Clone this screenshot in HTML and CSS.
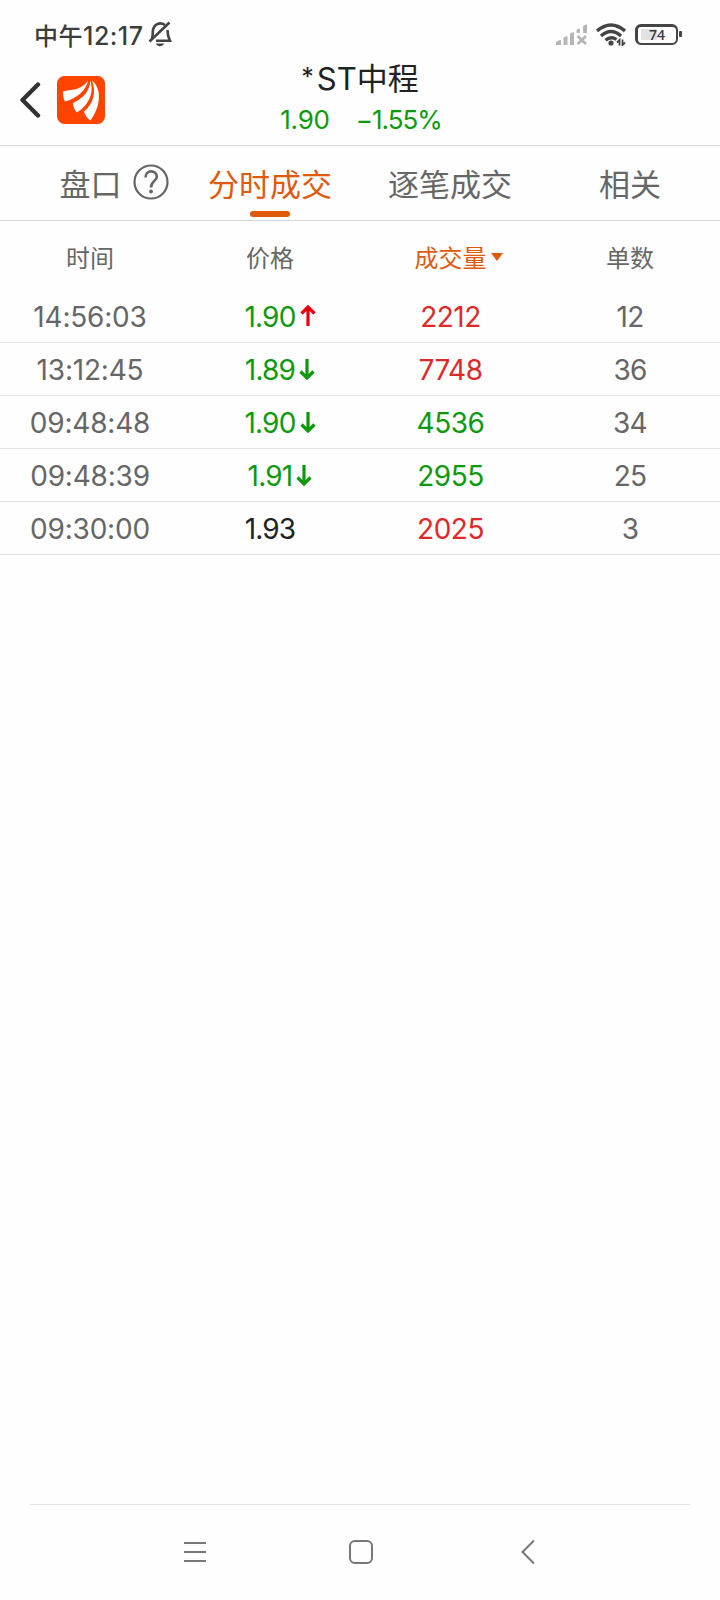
FILE: index.html
```
<!DOCTYPE html>
<html lang="zh-CN">
<head>
  <meta charset="UTF-8">
  <meta name="viewport" content="width=device-width, initial-scale=1">
  <title>*ST中程 分时成交</title>
  <link rel="stylesheet" href="styles.css">
</head>
<body>

<!-- Status bar -->
<div class="status-bar">
  <div class="status-left">
    <span class="clock"><span class="clock-cn">中午</span>12:17</span>
    <svg class="icon-mute" width="24" height="26" viewBox="0 0 24 26" fill="none" stroke="#444" stroke-width="2.600">
      <path d="M4 18C5 15 4.500 12 5 9C6 3 12 .5 17 4M19.500 9C19.500 14 20 16 22 19.800H8"/>
      <path d="M1.500 20.500L21.500 1.500"/>
      <path d="M8 22.500H16C15 26 9 26 8 22.500Z" fill="#444" stroke="none"/>
    </svg>
  </div>
  <div class="status-right">
    <svg class="icon-signal" width="32" height="21" viewBox="0 0 32 21" fill="#b5b5b5">
      <path d="M0 21V18.500Q1 16.500 5 16V21Z"/>
      <path d="M7.500 21V14Q8 12.500 11.500 12V21Z"/>
      <path d="M14 21V10Q14.500 8.500 18 8V21Z"/>
      <path d="M20.500 6.500Q20.500 5 24 4.500V9H20.500ZM27 3Q27 1 31 .5V9H27Z"/>
      <path d="M21.500 12L30 20M30 12L21.500 20" stroke="#b5b5b5" stroke-width="2.800"/>
    </svg>
    <svg class="icon-wifi" width="30" height="23" viewBox="0 0 30 23" fill="none" stroke="#444" stroke-width="3.400">
      <path d="M1 8Q15-4 29 8"/>
      <path d="M5 13Q15 4 25 13"/>
      <path d="M9.500 17.300Q15 12.500 20.500 16.500"/>
      <circle cx="15" cy="20" r="2.600" fill="#444" stroke="none"/>
      <path d="M23.500 22.500V17L21 19.500M26.500 16.500V22L29 19.500" stroke-width="1.800"/>
    </svg>
    <div class="battery"><div class="battery-body">74</div><div class="battery-tip"></div></div>
  </div>
</div>

<header>
  <div class="header-left">
    <svg class="icon-back" width="22" height="36" viewBox="0 0 22 36" fill="none" stroke="#333" stroke-width="4.400" stroke-linecap="round" stroke-linejoin="round">
      <path d="M19 2.500L3.500 18L19 33.500"/>
    </svg>
    <svg class="logo" width="48" height="48" viewBox="0 0 48 48">
      <rect width="48" height="48" rx="7.500" fill="#ff4400"/>
      <g fill="#fff">
        <path d="M31 4.500C29.500 14 20 22.500 8 25.500C6.500 23 6 19 6 15.500C12 13.500 16 14.500 21 12.500C26 10.500 29 7.500 31 4.500Z"/>
        <path d="M33.300 4.500C37.500 17 31.500 29.500 20 36.500C17.500 34 16 30.500 15.800 27C26 22.500 33 15 33.300 4.500Z"/>
        <path d="M35 4.500C45.500 13 43.500 31 33.500 44.500C30 42 28 39 27 35.500C36.500 28 39.500 16 35 4.500Z"/>
      </g>
    </svg>
  </div>
  <div class="stock">
    <h1><span class="star">*</span>ST中程</h1>
    <p class="quote"><span>1.90</span><span class="change">−1.55%</span></p>
  </div>
</header>

<nav>
  <a class="tab tab-quote">盘口
    <svg width="36" height="36" viewBox="0 0 36 36" fill="none" stroke="#666" stroke-width="2.200">
      <circle cx="18" cy="18" r="16.500"/>
      <path d="M12.500 13.500C12.500 5.500 23.800 5.500 23.800 12.800C23.800 17 18 17 18 23.500" stroke-width="2.600"/>
      <circle cx="18" cy="27.500" r="1.900" fill="#666" stroke="none"/>
    </svg>
  </a>
  <a class="tab active">分时成交</a>
  <a class="tab">逐笔成交</a>
  <a class="tab">相关</a>
</nav>

<main>
  <div class="row row-head">
    <div>时间</div>
    <div>价格</div>
    <div class="sorted">成交量<i class="caret"></i></div>
    <div>单数</div>
  </div>
  <div class="row">
    <div class="time">14:56:03</div>
    <div class="price green">1.90<svg class="arrow red-arrow" viewBox="0 0 16 22"><path d="M8 21V2M1.500 8.500L8 2L14.500 8.500"/></svg></div>
    <div class="volume red">2212</div>
    <div class="count">12</div>
  </div>
  <div class="row">
    <div class="time">13:12:45</div>
    <div class="price green">1.89<svg class="arrow" viewBox="0 0 16 22"><path d="M8 1V20M1.500 13.500L8 20L14.500 13.500"/></svg></div>
    <div class="volume red">7748</div>
    <div class="count">36</div>
  </div>
  <div class="row">
    <div class="time">09:48:48</div>
    <div class="price green">1.90<svg class="arrow" viewBox="0 0 16 22"><path d="M8 1V20M1.500 13.500L8 20L14.500 13.500"/></svg></div>
    <div class="volume green">4536</div>
    <div class="count">34</div>
  </div>
  <div class="row">
    <div class="time">09:48:39</div>
    <div class="price green">1.91<svg class="arrow" viewBox="0 0 16 22"><path d="M8 1V20M1.500 13.500L8 20L14.500 13.500"/></svg></div>
    <div class="volume green">2955</div>
    <div class="count">25</div>
  </div>
  <div class="row">
    <div class="time">09:30:00</div>
    <div class="price flat">1.93<span class="arrow"></span></div>
    <div class="volume red">2025</div>
    <div class="count">3</div>
  </div>
</main>

<!-- System navigation -->
<footer>
  <svg width="26" height="26" viewBox="0 0 26 26" fill="none" stroke="#777" stroke-width="2">
    <path d="M2 4H24M2 13H24M2 22H24"/>
  </svg>
  <svg width="26" height="26" viewBox="0 0 26 26" fill="none" stroke="#777" stroke-width="2">
    <rect x="2" y="2" width="22" height="22" rx="5"/>
  </svg>
  <svg width="26" height="26" viewBox="0 0 26 26" fill="none" stroke="#777" stroke-width="2">
    <path d="M20 1.500L8.500 13L20 24.500"/>
  </svg>
</footer>

</body>
</html>
```

FILE: styles.css
```
:root {
  --orange: #e05a0c;
  --green: #0d990d;
  --red: #e02828;
  --text: #666;
  --line: #d8d8d8;
}

* {
  margin: 0;
  padding: 0;
  box-sizing: border-box;
}

body {
  display: flex;
  flex-direction: column;
  height: 1600px;
  background: #fefefe;
  color: var(--text);
  font-family: Inter, "Noto Sans CJK SC", sans-serif;
}

svg {
  display: block;
  flex-shrink: 0;
}

.status-bar {
  display: flex;
  justify-content: space-between;
  height: 60px;
  padding: 0 38px 0 34px;
  color: #3c3c3c;
}

.status-left, .status-right {
  display: flex;
  align-items: center;
  height: 68px;
}

.clock {
  font-size: 25px;
  font-weight: 500;
  letter-spacing: 0.5px;
}

.clock-cn {
  font-size: 24px;
}

.icon-mute {
  margin-left: 4px;
}

.icon-signal {
  margin-top: 1px;
}

.icon-wifi {
  margin: 1px 9px 0 8px;
}

.battery {
  display: flex;
  align-items: center;
  gap: 1px;
}

.battery-body {
  width: 43px;
  height: 21px;
  border: 2.5px solid #444;
  border-width: 3px 2px 2px 3px;
  border-radius: 6px;
  background: linear-gradient(#e2e2e2, #e2e2e2) 3px 2px / 16px 11px no-repeat;
  font: 600 14px/16px "Open Sans", sans-serif;
  text-align: center;
}

.battery-tip {
  width: 3px;
  height: 6px;
  border-radius: 1px;
  background: #444;
}

header {
  display: grid;
  grid-template-columns: 180px 360px 180px;
  height: 86px;
  border-bottom: 1px solid var(--line);
}

.header-left {
  display: flex;
  align-items: center;
  gap: 16px;
  height: 80px;
  padding-left: 19px;
}

.stock {
  text-align: center;
}

h1 {
  height: 38px;
  color: #222;
  font-size: 31px;
  font-weight: 400;
  line-height: 38px;
}

.star {
  margin-right: 3px;
  font-size: 25px;
  line-height: 1;
  vertical-align: 4px;
}

.quote {
  display: flex;
  justify-content: center;
  gap: 26px;
  padding-left: 2px;
  color: var(--green);
  font-size: 26px;
  line-height: 43px;
  letter-spacing: -0.2px;
}

.change {
  letter-spacing: -1px;
}

nav {
  display: grid;
  grid-template-columns: repeat(4, 180px);
  height: 75px;
  border-bottom: 1px solid var(--line);
}

.tab {
  position: relative;
  display: flex;
  align-items: center;
  justify-content: center;
  height: 74px;
  padding-bottom: 2px;
  font-size: 31px;
}

.tab-quote {
  gap: 11px;
  padding-left: 48px;
}

.tab.active {
  color: var(--orange);
}

.tab.active::after {
  content: "";
  position: absolute;
  bottom: 3px;
  width: 40px;
  height: 6px;
  border-radius: 3px;
  background: var(--orange);
}

main {
  flex: 1;
}

.row {
  display: grid;
  grid-template-columns: repeat(4, 180px);
  height: 53px;
  padding-top: 2px;
  border-bottom: 1px solid #e2e2e2;
  font-size: 28px;
}

.row > div {
  display: flex;
  align-items: center;
  justify-content: center;
}

.row-head {
  height: 69px;
  padding-top: 1px;
  border: none;
  font-size: 24px;
}

.row .sorted {
  gap: 4px;
  padding-left: 17px;
  color: var(--orange);
}

.caret {
  margin-top: 2px;
  border: 6px solid transparent;
  border-top: 8px solid var(--orange);
  border-bottom: none;
}

.time {
  letter-spacing: -0.2px;
}

.row .price {
  padding-left: 20px;
  letter-spacing: -0.8px;
}

.volume {
  padding-left: 1px;
  letter-spacing: -0.5px;
}

.count {
  letter-spacing: -0.8px;
}

.green {
  color: var(--green);
}

.red {
  color: var(--red);
}

.flat {
  color: #222;
}

.arrow {
  width: 16px;
  height: 22px;
  margin: 0 0 2px 4px;
  fill: none;
  stroke: var(--green);
  stroke-width: 3.2;
}

.red-arrow {
  stroke: #e60012;
}

footer {
  display: flex;
  align-items: center;
  justify-content: center;
  gap: 140px;
  height: 96px;
  margin: 0 30px;
  padding: 0 0 2px 2px;
  border-top: 1px solid #e2e2e2;
}
```
